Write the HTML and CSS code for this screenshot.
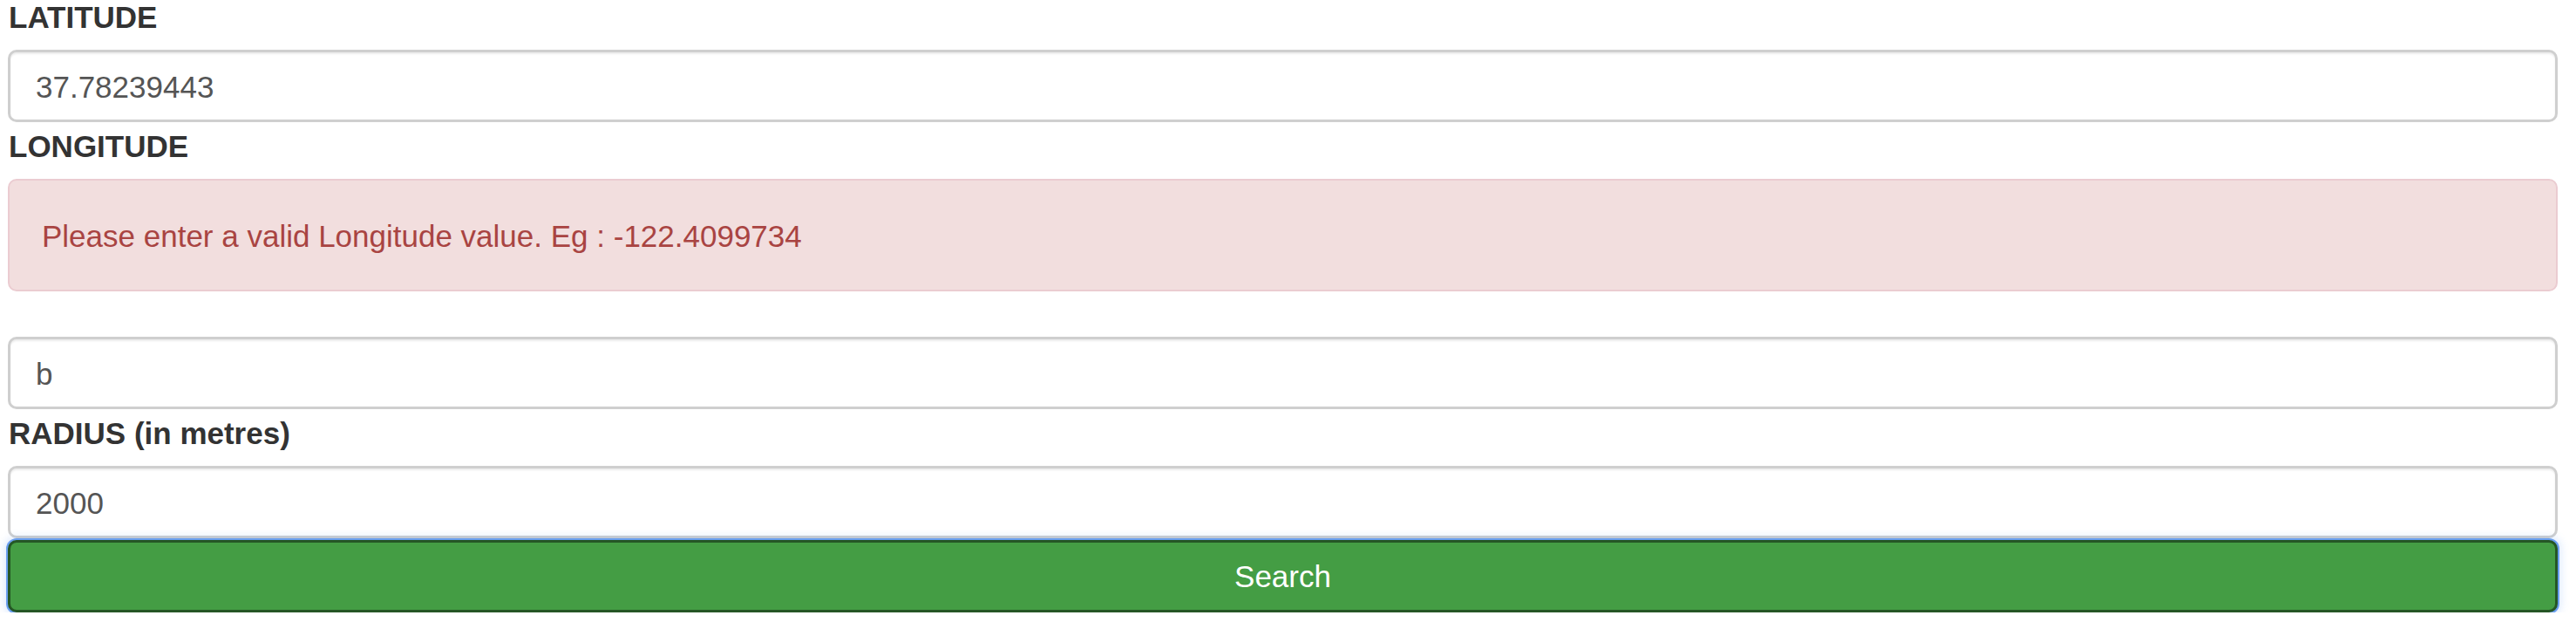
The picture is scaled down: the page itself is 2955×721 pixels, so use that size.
FILE: index.html
```html
<!DOCTYPE html>
<html>
<head>
<meta charset="utf-8">
<link rel="stylesheet" href="styles.css">
</head>
<body>
<form class="form">
  <label class="label">LATITUDE</label>
  <input class="control" type="text" value="37.78239443">
  <label class="label">LONGITUDE</label>
  <div class="alert">Please enter a valid Longitude value. Eg : -122.4099734</div>
  <input class="control" type="text" value="b">
  <label class="label">RADIUS (in metres)</label>
  <input class="control" type="text" value="2000">
  <button class="btn" type="button">Search</button>
</form>
</body>
</html>
```
FILE: styles.css
```css
html, body {
  margin: 0;
  padding: 0;
  background: #fff;
}
body {
  font-family: "Liberation Sans", Arial, sans-serif;
  font-size: 34px;
  line-height: 49px;
  color: #333;
}
.form {
  display: flex;
  flex-direction: column;
  margin: -8px 21px 0 9px;
}
.label {
  display: block;
  font-weight: bold;
  font-size: 35px;
  line-height: 49px;
  color: #333;
  margin: 3px 0 13px 1px;
}
.control {
  display: block;
  box-sizing: border-box;
  width: 100%;
  height: 83px;
  margin: 0;
  padding: 2px 29px 0 29px;
  font-family: "Liberation Sans", Arial, sans-serif;
  font-size: 35px;
  color: #555;
  background: #fff;
  border: 3px solid #cfcfcf;
  border-radius: 10px;
  box-shadow: inset 0 2px 2px rgba(0, 0, 0, 0.075);
  outline: none;
}
.alert {
  box-sizing: border-box;
  height: 129px;
  padding: 2px 37px 0 37px;
  display: flex;
  align-items: center;
  background: #f2dede;
  border: 2px solid #ebccd1;
  border-radius: 10px;
  color: #a94442;
  font-size: 35px;
  margin-bottom: 52px;
}
.btn {
  display: block;
  box-sizing: border-box;
  width: 100%;
  height: 83px;
  margin: 2px 0 0 0;
  padding: 0;
  font-family: "Liberation Sans", Arial, sans-serif;
  font-size: 35px;
  color: #fff;
  background: #449d44;
  border: 3px solid #255625;
  border-radius: 10px;
  box-shadow: 0 0 0 2px #6a9ff0, 0 0 10px 4px rgba(106, 159, 240, 0.22);
  cursor: pointer;
}
```
